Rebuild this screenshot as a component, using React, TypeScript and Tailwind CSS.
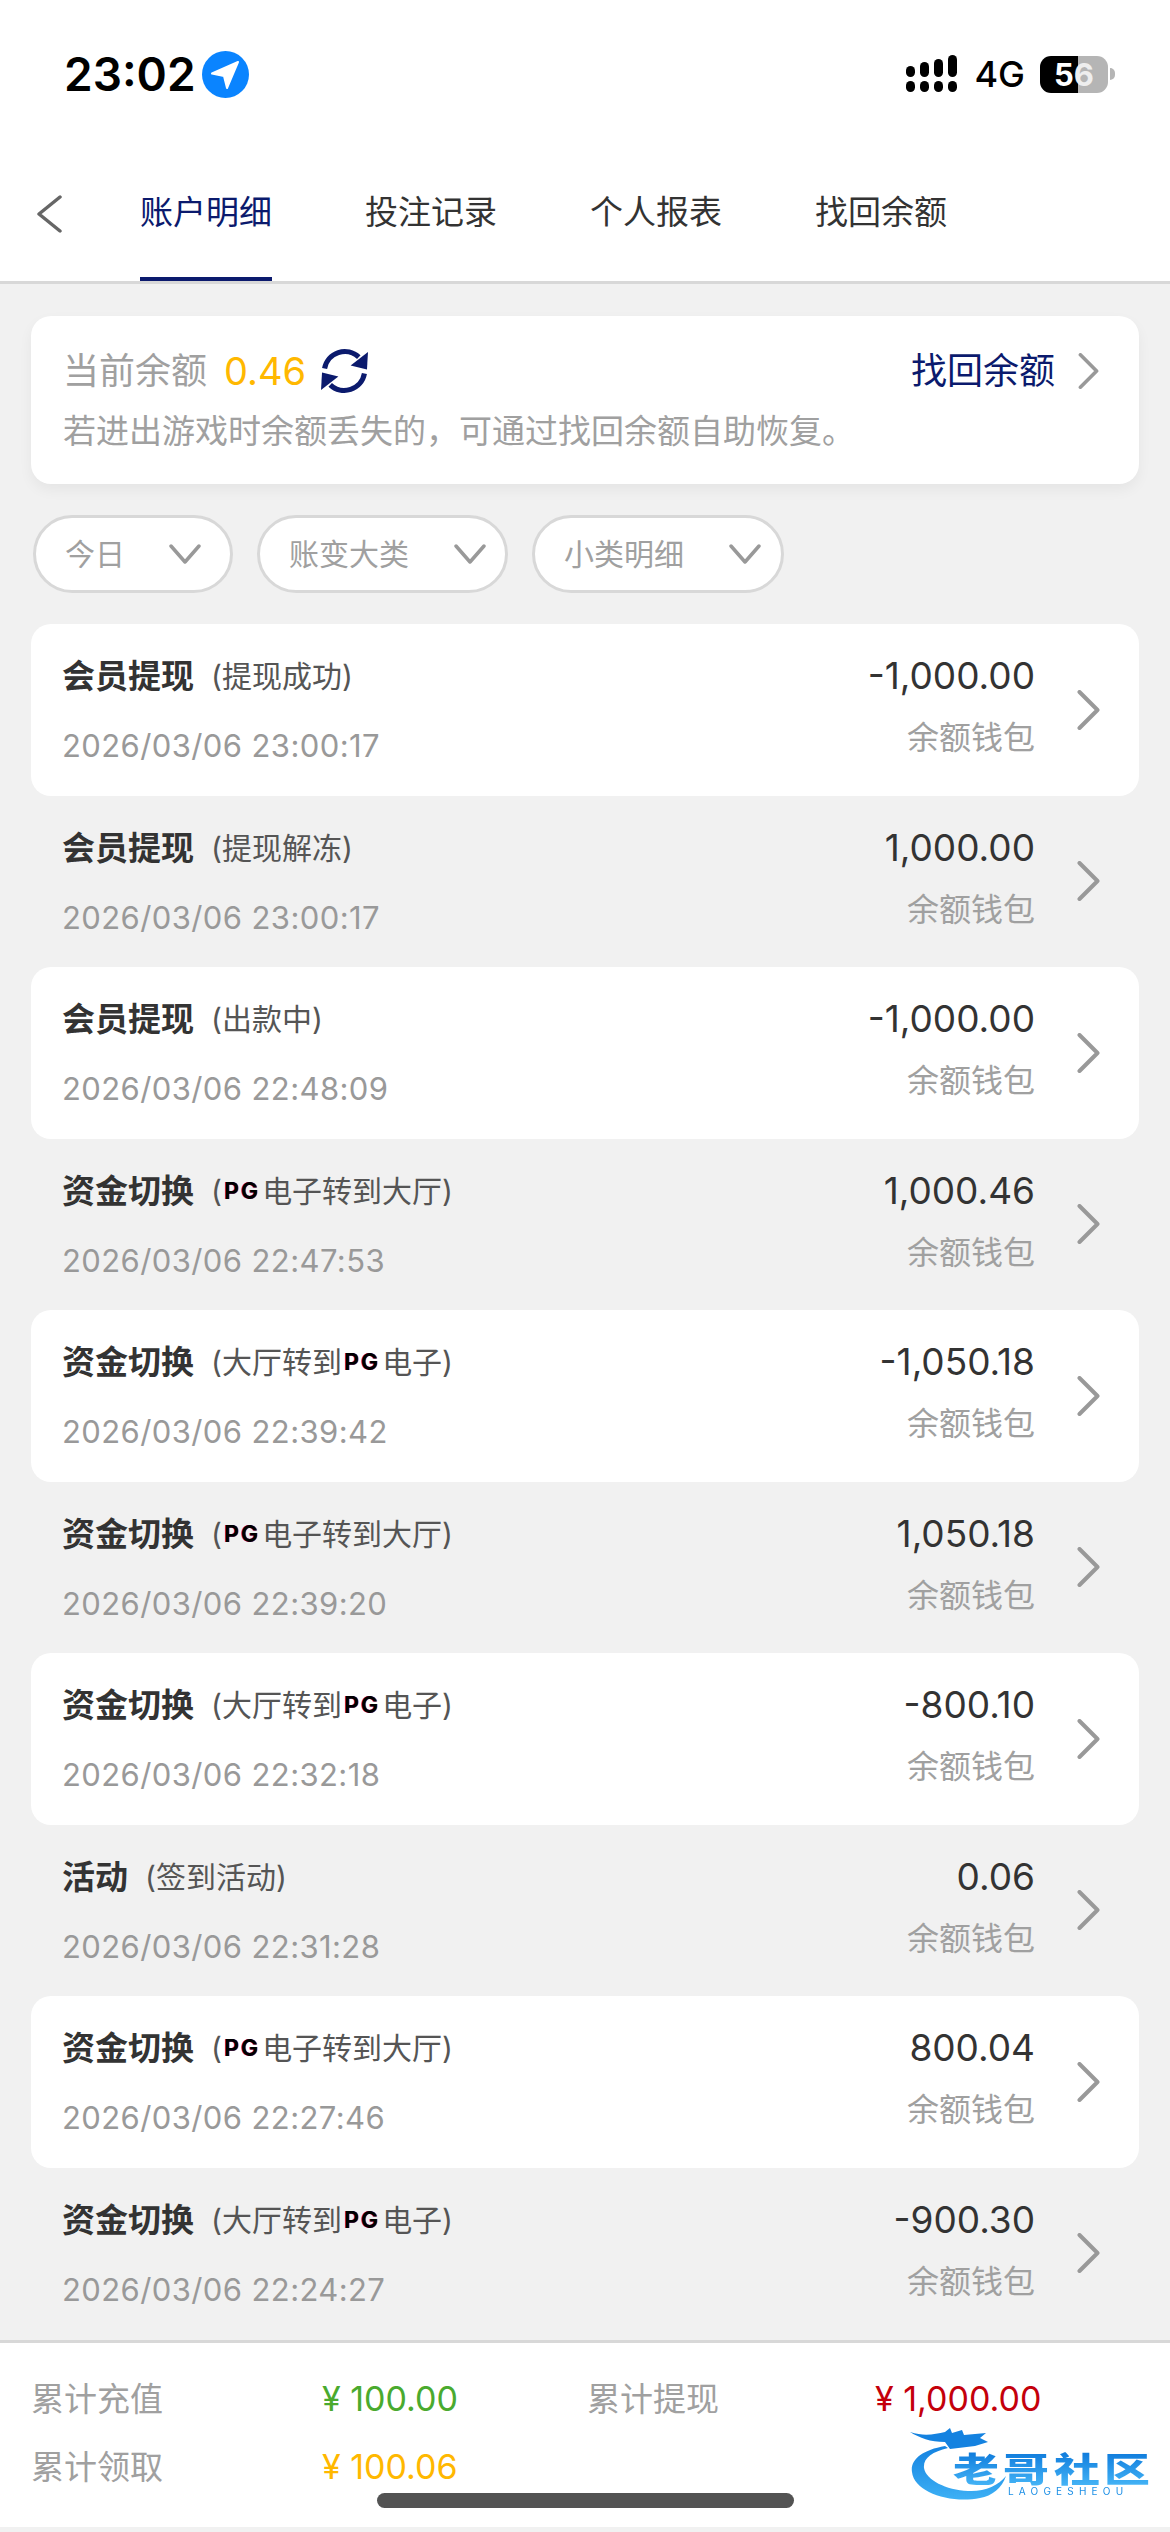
type Row = {
  title: string
  note: React.ReactNode
  date: string
  amount: string
}

const PG = () => (
  <span className="mx-[2px] text-[23px] font-bold tracking-[2px] text-black [text-shadow:-0.5px_0_#d946ef,0.5px_0_#f97316]">
    PG
  </span>
)

const toHall = (
  <>
    (<PG />电子转到大厅)
  </>
)
const toGame = (
  <>
    (大厅转到<PG />电子)
  </>
)

const rows: Row[] = [
  { title: "会员提现", note: "(提现成功)", date: "2026/03/06 23:00:17", amount: "-1,000.00" },
  { title: "会员提现", note: "(提现解冻)", date: "2026/03/06 23:00:17", amount: "1,000.00" },
  { title: "会员提现", note: "(出款中)", date: "2026/03/06 22:48:09", amount: "-1,000.00" },
  { title: "资金切换", note: toHall, date: "2026/03/06 22:47:53", amount: "1,000.46" },
  { title: "资金切换", note: toGame, date: "2026/03/06 22:39:42", amount: "-1,050.18" },
  { title: "资金切换", note: toHall, date: "2026/03/06 22:39:20", amount: "1,050.18" },
  { title: "资金切换", note: toGame, date: "2026/03/06 22:32:18", amount: "-800.10" },
  { title: "活动", note: "(签到活动)", date: "2026/03/06 22:31:28", amount: "0.06" },
  { title: "资金切换", note: toHall, date: "2026/03/06 22:27:46", amount: "800.04" },
  { title: "资金切换", note: toGame, date: "2026/03/06 22:24:27", amount: "-900.30" },
]

function Chevron({ className }: { className?: string }) {
  return (
    <svg viewBox="0 0 24 40" className={className} fill="none" stroke="currentColor" strokeWidth="4" strokeLinecap="round" strokeLinejoin="round">
      <path d="M3 2 L21 20 L3 38" />
    </svg>
  )
}

function StatusBar() {
  return (
    <div className="flex h-[146px] items-start justify-between pl-[64px] pr-[55px] pt-[50px]">
      <div className="flex items-center gap-[6px]">
        <span className="text-[46px] font-semibold leading-[48px] text-black">23:02</span>
        <svg viewBox="0 0 47 47" className="h-[47px] w-[47px]">
          <circle cx="23.5" cy="23.5" r="23.5" fill="#0a84ff" />
          <path d="M36 11 L10 22.5 L22 25 L25 37 Z" fill="#fff" stroke="#fff" strokeWidth="2" strokeLinejoin="round" />
        </svg>
      </div>
      <div className="flex items-center pt-[5px]">
        <svg viewBox="0 0 52 38" className="h-[38px] w-[52px]" fill="#000">
          <rect x="0" y="11" width="9" height="11" rx="4.5" />
          <rect x="14" y="7" width="9" height="15" rx="4.5" />
          <rect x="28" y="4" width="9" height="18" rx="4.5" />
          <rect x="42" y="0" width="9" height="22" rx="4.5" />
          <rect x="0" y="26" width="9" height="11" rx="4.5" />
          <rect x="14" y="26" width="9" height="11" rx="4.5" />
          <rect x="28" y="26" width="9" height="11" rx="4.5" />
          <rect x="42" y="26" width="9" height="11" rx="4.5" />
        </svg>
        <span className="ml-[16px] text-[36px] font-medium leading-[38px] text-black">4G</span>
        <div className="ml-[15px] flex h-[37px] w-[68px] items-center justify-center rounded-[11px] bg-[linear-gradient(90deg,#000_56%,#b5b5b5_56%)] text-[31px] font-bold leading-none text-white">
          5<span className="text-[#eeeeee]">6</span>
        </div>
        <div className="ml-[2px] h-[12px] w-[5px] rounded-r-full bg-[#b5b5b5]" />
      </div>
    </div>
  )
}

function Tabs() {
  const tabs = ["账户明细", "投注记录", "个人报表", "找回余额"]
  return (
    <div className="flex h-[138px] items-stretch border-b-[3px] border-[#d8d8d8] bg-white">
      <div className="flex w-[140px] items-center pl-[36px] text-[#666666]">
        <svg viewBox="0 0 26 38" className="h-[38px] w-[26px]" fill="none" stroke="currentColor" strokeWidth="3.5" strokeLinecap="round" strokeLinejoin="round">
          <path d="M24 2 L3 19 L24 36" />
        </svg>
      </div>
      <div className="flex gap-[93px]">
        {tabs.map((t, i) => (
          <div
            key={t}
            className={
              i === 0
                ? "flex w-[132px] items-center justify-center border-b-4 border-[#0b1a6d] pt-[2px] text-[33px] text-[#0b1a6d]"
                : "flex w-[132px] items-center justify-center pb-[4px] pt-[2px] text-[33px] text-[#333333]"
            }
          >
            {t}
          </div>
        ))}
      </div>
    </div>
  )
}

function BalanceCard() {
  return (
    <div className="mx-[31px] mt-[32px] flex h-[168px] flex-col rounded-[20px] bg-white pl-[32px] pr-[39px] pt-[31px] shadow-[0_6px_14px_rgba(0,0,0,0.05)]">
      <div className="flex items-center justify-between">
        <div className="flex items-center">
          <span className="text-[36px] leading-[48px] text-[#a0a0a0]">当前余额</span>
          <span className="ml-[17px] text-[38px] leading-[48px] text-[#ffb800]">0.46</span>
          <svg viewBox="0 0 46 47" className="ml-[15px] h-[48px] w-[47px]" fill="none" stroke="#0b1a6d" strokeWidth="5">
            <path d="M3.5 21 A20 20 0 0 1 37 10" />
            <path d="M46 5 L45 22 L29 18 Z" fill="#0b1a6d" stroke="none" />
            <path d="M42.5 26 A20 20 0 0 1 9 37" />
            <path d="M0 42 L1 25 L17 29 Z" fill="#0b1a6d" stroke="none" />
          </svg>
        </div>
        <div className="flex items-center">
          <span className="text-[36px] leading-[48px] text-[#0b1a6d]">找回余额</span>
          <Chevron className="ml-[22px] h-[36px] w-[23px] text-[#999999]" />
        </div>
      </div>
      <p className="mt-[14px] text-[33px] leading-[44px] text-[#a0a0a0]">若进出游戏时余额丢失的{"\uFF0C"}可通过找回余额自助恢复{"\u3002"}</p>
    </div>
  )
}

function Filters() {
  const items = [
    { label: "今日", w: "w-[200px]", gap: "ml-[44px]" },
    { label: "账变大类", w: "w-[251px]", gap: "ml-[45px]" },
    { label: "小类明细", w: "w-[252px]", gap: "ml-[45px]" },
  ]
  return (
    <div className="ml-[33px] mt-[31px] flex gap-[24px]">
      {items.map((f) => (
        <div key={f.label} className={`flex h-[78px] ${f.w} items-center rounded-full border-[3px] border-[#d8d8d8] bg-white pl-[29px]`}>
          <span className="text-[30px] leading-none text-[#a0a0a0]">{f.label}</span>
          <svg viewBox="0 0 32 20" className={`${f.gap} h-[20px] w-[32px]`} fill="none" stroke="#999999" strokeWidth="3.5" strokeLinecap="round" strokeLinejoin="round">
            <path d="M2 2 L16 18 L30 2" />
          </svg>
        </div>
      ))}
    </div>
  )
}

function RowItem({ row, odd }: { row: Row; odd: boolean }) {
  return (
    <div className={odd ? "flex h-[171.5px] items-center rounded-[20px] bg-white pl-[31px] pr-[38px]" : "flex h-[171.5px] items-center rounded-[20px] pl-[31px] pr-[38px]"}>
      <div className="min-w-0 flex-1 pt-[3px]">
        <div className="flex h-[40px] items-center">
          <span className="text-[33px] font-bold leading-[40px] text-[#333333]">{row.title}</span>
          <span className="ml-[17px] flex items-center text-[30px] leading-[40px] text-[#555555]">{row.note}</span>
        </div>
        <div className="mt-[30px] h-[40px] text-[31px] leading-[40px] tracking-[0.4px] text-[#999999]">{row.date}</div>
      </div>
      <div className="mb-[5px] mr-[41px] text-right">
        <div className="text-[37px] leading-[40px] text-[#333333]">{row.amount}</div>
        <div className="mt-[22px] text-[32px] leading-[40px] text-[#a0a0a0]">余额钱包</div>
      </div>
      <Chevron className="h-[40px] w-[25px] text-[#999999]" />
    </div>
  )
}

function Logo() {
  return (
    <div className="pointer-events-none absolute left-[880px] top-[2420px] h-[112px] w-[290px] blur-[0.6px]">
      <svg viewBox="0 0 290 112" className="absolute inset-0 h-[112px] w-[290px]">
        <defs>
          <linearGradient id="dragon" x1="0" y1="0" x2="0" y2="1">
            <stop offset="0" stopColor="#1482e0" />
            <stop offset="1" stopColor="#3db0f5" />
          </linearGradient>
        </defs>
        <path d="M65 26 C 42 30 30 40 32 52 C 34 72 70 84 100 78 C 112 76 122 68 126 56 C 118 66 104 72 88 71 C 66 70 46 60 44 48 C 43 38 52 32 68 28 Z" fill="url(#dragon)" />
        <path d="M30 12 C 45 17 55 14 65 12 L 70 8 L 72 13 L 82 10 L 84 15 L 106 13 L 100 18 L 108 22 L 95 26 L 70 29 L 65 22 C 50 22 40 18 30 12 Z" fill="#1482e0" />
      </svg>
      <div className="absolute left-[73px] top-[32px] flex w-[197px] justify-between">
        {"老哥社区".split("").map((c) => (
          <span key={c} className="w-[46px] scale-x-[1.35] bg-[linear-gradient(180deg,#0f7bdc,#48b8f8)] bg-clip-text text-center text-[34px] font-black leading-[36px] text-transparent">
            {c}
          </span>
        ))}
      </div>
      <div className="absolute left-[128px] top-[66px] text-[10px] leading-[11px] tracking-[5.2px] text-[#1c8fe6]">LAOGESHEOU</div>
    </div>
  )
}

function Footer() {
  return (
    <div className="mb-[5px] mt-auto h-[187px] border-t-[3px] border-[#d8d8d8] bg-white pl-[31px] pt-[36px]">
      <div className="grid grid-cols-[291px_265px_288px_1fr] gap-y-[28px] text-[33px] leading-[40px]">
        <span className="text-[#a0a0a0]">累计充值</span>
        <span className="text-[34px] text-[#4aaa2e]">¥ 100.00</span>
        <span className="text-[#a0a0a0]">累计提现</span>
        <span className="text-[34px] text-[#c4000b]">¥ 1,000.00</span>
        <span className="text-[#a0a0a0]">累计领取</span>
        <span className="text-[34px] text-[#ffb800]">¥ 100.06</span>
      </div>
    </div>
  )
}

export default function App() {
  return (
    <div className="relative flex h-[2532px] w-[1170px] flex-col overflow-hidden bg-[#f1f1f1] font-['Inter','Noto_Sans_CJK_SC',sans-serif]">
      <div className="bg-white">
        <StatusBar />
        <Tabs />
      </div>
      <BalanceCard />
      <Filters />
      <div className="mx-[31px] mt-[31px]">
        {rows.map((row, i) => (
          <RowItem key={i} row={row} odd={i === 0 || i === 2 || i === 4 || i === 6 || i === 8} />
        ))}
      </div>
      <Footer />
      <Logo />
      {/* home indicator */}
      <div className="absolute left-[377px] top-[2493px] h-[15px] w-[417px] rounded-full bg-[#535353]" />
    </div>
  )
}
